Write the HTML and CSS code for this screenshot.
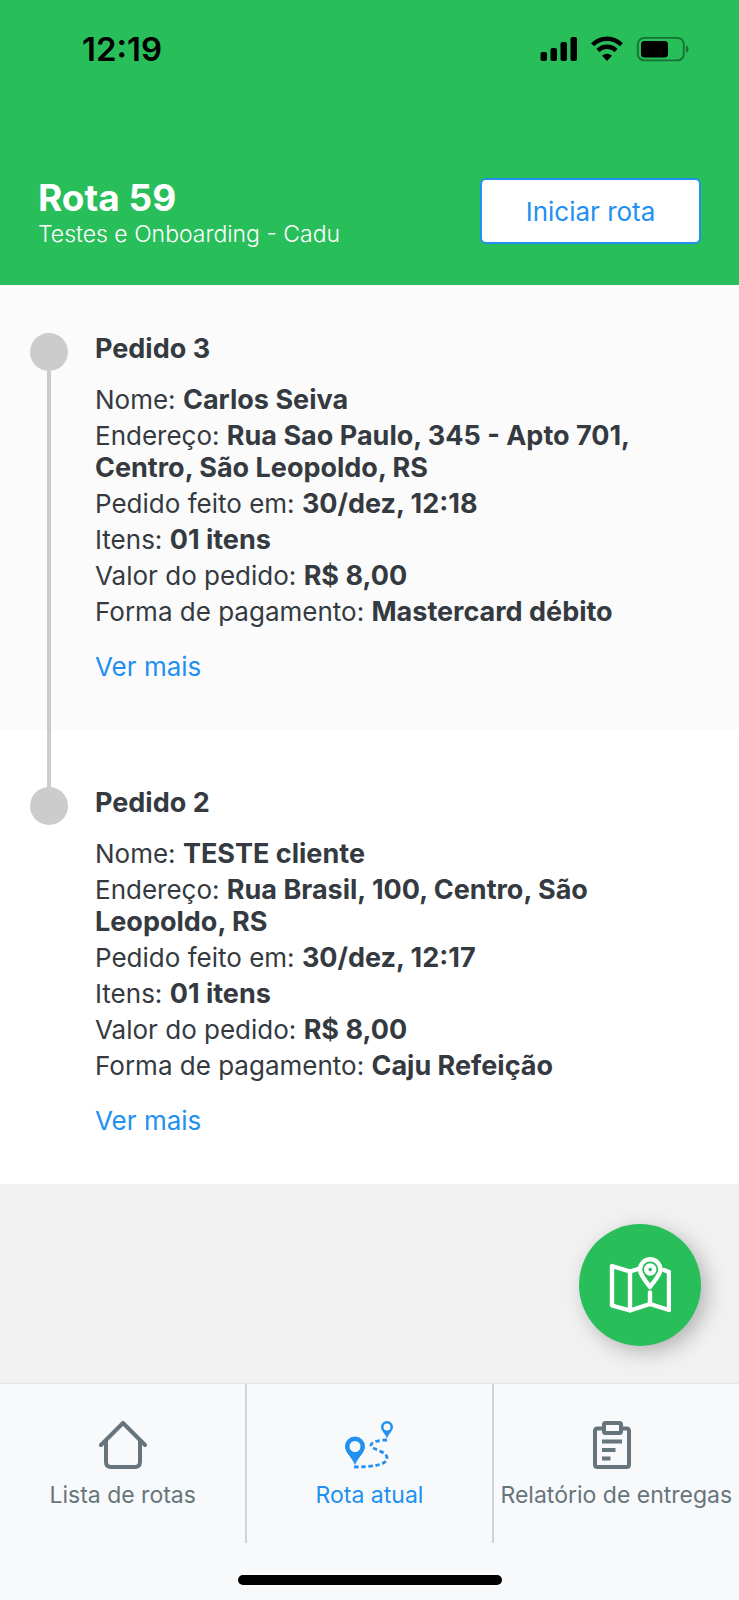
FILE: index.html
```html
<!DOCTYPE html>
<html lang="pt-BR">
<head>
    <meta charset="UTF-8">
    <meta name="viewport" content="width=device-width, initial-scale=1.0">
    <title>Rota 59</title>
    <link rel="stylesheet" href="styles.css">
</head>
<body>

    <header class="header">
        <div class="status-bar">
            <span class="time">12:19</span>
            <svg class="status-icons" viewBox="0 0 150 26" aria-hidden="true">
                <!-- signal -->
                <rect x="0.5" y="16" width="6.500" height="9" rx="2"/>
                <rect x="10.5" y="12" width="6.500" height="13" rx="2"/>
                <rect x="20.5" y="6" width="6.500" height="19" rx="2"/>
                <rect x="30.5" y="1" width="6.500" height="24" rx="2"/>
                <!-- wifi -->
                <g fill="none" stroke="#000" stroke-width="4.4">
                    <path d="M52.6 8.8a20 20 0 0 1 28.8 0"/>
                    <path d="M58 14.6a12.6 12.6 0 0 1 18 0"/>
                </g>
                <path d="M67 25l-5-5.2a7.4 7.4 0 0 1 10 0z"/>
                <!-- battery -->
                <g opacity="0.4">
                    <rect x="97.8" y="1.8" width="46" height="22.6" rx="6.5" fill="none" stroke="#000" stroke-width="1.8"/>
                    <path d="M146 9.500c3.4 1 3.4 6.2 0 7.2z"/>
                </g>
                <rect x="101" y="5" width="27" height="16.5" rx="3.5"/>
            </svg>
        </div>
        <div class="route-bar">
            <div class="route-info">
                <h1>Rota 59</h1>
                <p>Testes e Onboarding - Cadu</p>
            </div>
            <button type="button" class="start-button">Iniciar rota</button>
        </div>
    </header>

    <main class="content">
        <section class="order">
            <div class="rail"><span class="dot"></span></div>
            <div class="order-info">
                <h2>Pedido 3</h2>
                <p>Nome: <strong>Carlos Seiva</strong></p>
                <p>Endereço: <strong>Rua Sao Paulo, 345 - Apto 701, Centro, São Leopoldo, RS</strong></p>
                <p>Pedido feito em: <strong>30/dez, 12:18</strong></p>
                <p>Itens: <strong>01 itens</strong></p>
                <p>Valor do pedido: <strong>R$ 8,00</strong></p>
                <p>Forma de pagamento: <strong>Mastercard débito</strong></p>
                <a href="#">Ver mais</a>
            </div>
        </section>

        <section class="order">
            <div class="rail"><span class="dot"></span></div>
            <div class="order-info">
                <h2>Pedido 2</h2>
                <p>Nome: <strong>TESTE cliente</strong></p>
                <p>Endereço: <strong>Rua Brasil, 100, Centro, São Leopoldo, RS</strong></p>
                <p>Pedido feito em: <strong>30/dez, 12:17</strong></p>
                <p>Itens: <strong>01 itens</strong></p>
                <p>Valor do pedido: <strong>R$ 8,00</strong></p>
                <p>Forma de pagamento: <strong>Caju Refeição</strong></p>
                <a href="#">Ver mais</a>
            </div>
        </section>

        <div class="map-area">
            <button type="button" class="map-button" aria-label="Mapa">
                <svg viewBox="0 0 62 56" fill="none" stroke="#fff" stroke-width="4.4" stroke-linecap="round" stroke-linejoin="round">
                    <path d="M29 12l-8 2.5L3 9v39.500l18 5 20-6.500L60 53V15l-5-2"/>
                    <path d="M21 14.500V53M41 35.500V47"/>
                    <path d="M41 30C36 23 31 18 31 12.500a10.200 10.200 0 0 1 20.400 0C51.400 18 46 23 41 30z"/>
                    <circle cx="41.200" cy="12.500" r="4"/>
                </svg>
            </button>
        </div>
    </main>

    <footer class="footer">
        <nav class="tabs">
            <a href="#" class="tab">
                <svg viewBox="0 0 48 48" fill="none" stroke="currentColor" stroke-width="4" stroke-linecap="round" stroke-linejoin="round">
                    <path d="M2 24L24 2l22 22"/>
                    <path d="M7 19.500V41q0 5 5 5h24q5 0 5-5V19.500"/>
                </svg>
                <span>Lista de rotas</span>
            </a>
            <a href="#" class="tab active">
                <svg viewBox="0 0 48 48" fill="currentColor">
                    <path fill-rule="evenodd" d="M10 44C7 36 0 32 0 25.500a10 10 0 0 1 20 0C20 32 13 36 10 44zM10 31a5.500 5.500 0 1 0 0-11 5.500 5.500 0 0 0 0 11z"/>
                    <path fill-rule="evenodd" d="M42 17.500c-1.500-5-6-7.500-6-11.500a6 6 0 0 1 12 0c0 4-4.500 6.500-6 11.500zM42 9.500a3.500 3.500 0 1 0 0-7 3.500 3.500 0 0 0 0 7z"/>
                    <path d="M42 19c-7 0-16 1.500-16 5.500S42 30 42 37c0 7-15 9-33 9" fill="none" stroke="currentColor" stroke-width="2.800" stroke-dasharray="4.500 2.600"/>
                </svg>
                <span>Rota atual</span>
            </a>
            <a href="#" class="tab">
                <svg viewBox="4 0 48 48" fill="none" stroke="currentColor" stroke-width="4" stroke-linejoin="round">
                    <path d="M15 7.500H9.500q-2.500 0-2.500 2.500v33.500q0 2.500 2.500 2.500h29q2.500 0 2.500-2.500V10q0-2.500-2.500-2.500H33"/>
                    <rect x="16" y="2" width="17" height="10" rx="1.500"/>
                    <path d="M14 20.500h20M14 29h13.500M14 37.500h8.500"/>
                </svg>
                <span>Relatório de entregas</span>
            </a>
        </nav>
        <div class="home-indicator"></div>
    </footer>

</body>
</html>
```

FILE: styles.css
```css
* {
    box-sizing: border-box;
}
body {
    font-family: Inter, "Liberation Sans", sans-serif;
    margin: 0;
    min-height: 100vh;
    display: flex;
    flex-direction: column;
    background-color: #f1f1f1;
    color: #343a40;
    font-size: 26px;
    line-height: 32px;
}
h1, h2, p {
    margin: 0;
}
a {
    color: #2190f0;
    text-decoration: none;
}

.header {
    background-color: #28be5a;
    color: #fff;
}
.status-bar {
    display: flex;
    justify-content: space-between;
    align-items: center;
    height: 98px;
    padding: 0 49px 0 82px;
    color: #000;
}
.time {
    font-size: 33px;
    font-weight: 600;
}
.status-icons {
    width: 150px;
    height: 26px;
}
.route-bar {
    display: flex;
    justify-content: space-between;
    align-items: flex-start;
    padding: 80px 38px 35px;
}
.route-info h1 {
    font-size: 37px;
    line-height: 40px;
}
.route-info p {
    font-size: 23px;
    font-weight: 300;
    line-height: 32px;
}
.start-button {
    width: 221px;
    height: 66px;
    background-color: #fff;
    border: 2px solid #2190f0;
    border-radius: 6px;
    color: #2190f0;
    font-family: inherit;
    font-size: 26px;
    cursor: pointer;
}

.content {
    flex: 1;
    display: flex;
    flex-direction: column;
}
.order {
    display: flex;
    background-color: #fff;
}
.order:first-child {
    background-color: #fbfbfb;
}
.rail {
    width: 38px;
    margin: 0 27px 0 30px;
    display: flex;
    flex-direction: column;
    align-items: center;
}
.rail::before,
.rail::after {
    content: "";
    width: 4px;
    background-color: #ccc;
}
.rail::before {
    height: 57px;
}
.rail::after {
    flex: 1;
}
.dot {
    width: 38px;
    height: 38px;
    border-radius: 50%;
    background-color: #ccc;
}
.order-info {
    flex: 1;
    padding: 57px 80px 47px 0;
}
.order:first-child .rail::before {
    height: 48px;
    background-color: transparent;
}
.order:first-child .order-info {
    padding-top: 48px;
}
.order:nth-child(2) .rail::after {
    background-color: transparent;
}
.order-info h2 {
    font-size: 27px;
    line-height: 32px;
    margin-bottom: 19px;
}
.order-info p {
    margin-bottom: 4px;
}
.order-info strong {
    font-size: 27px;
    font-weight: 700;
    line-height: 30px;
}
.order-info a {
    display: inline-block;
    margin-top: 19px;
}

.map-area {
    flex: 1;
    display: flex;
    justify-content: flex-end;
    align-items: flex-end;
    padding: 37px 38px;
}
.map-button {
    display: flex;
    justify-content: center;
    align-items: center;
    width: 122px;
    height: 122px;
    padding: 0;
    border: none;
    border-radius: 50%;
    background-color: #28be5a;
    box-shadow: 6px 6px 20px rgba(0, 0, 0, 0.25);
    cursor: pointer;
}
.map-button svg {
    width: 62px;
    height: 56px;
}

.footer {
    background-color: #f8f9fa;
    border-top: 1px solid #e3e6e8;
}
.tabs {
    display: grid;
    grid-template-columns: repeat(3, minmax(0, 1fr));
}
.tab {
    display: flex;
    flex-direction: column;
    align-items: center;
    gap: 10px;
    height: 159px;
    padding-top: 37px;
    border: 0 solid #ced4da;
    border-width: 0 1px;
    color: #66757c;
    font-size: 23px;
    white-space: nowrap;
}
.tab:first-child {
    border-left: none;
}
.tab:last-child {
    border-right: none;
}
.tab.active {
    color: #2190f0;
}
.tab svg {
    width: 48px;
    height: 48px;
}
.home-indicator {
    width: 264px;
    height: 10px;
    margin: 32px auto 15px;
    border-radius: 5px;
    background-color: #000;
}
```
